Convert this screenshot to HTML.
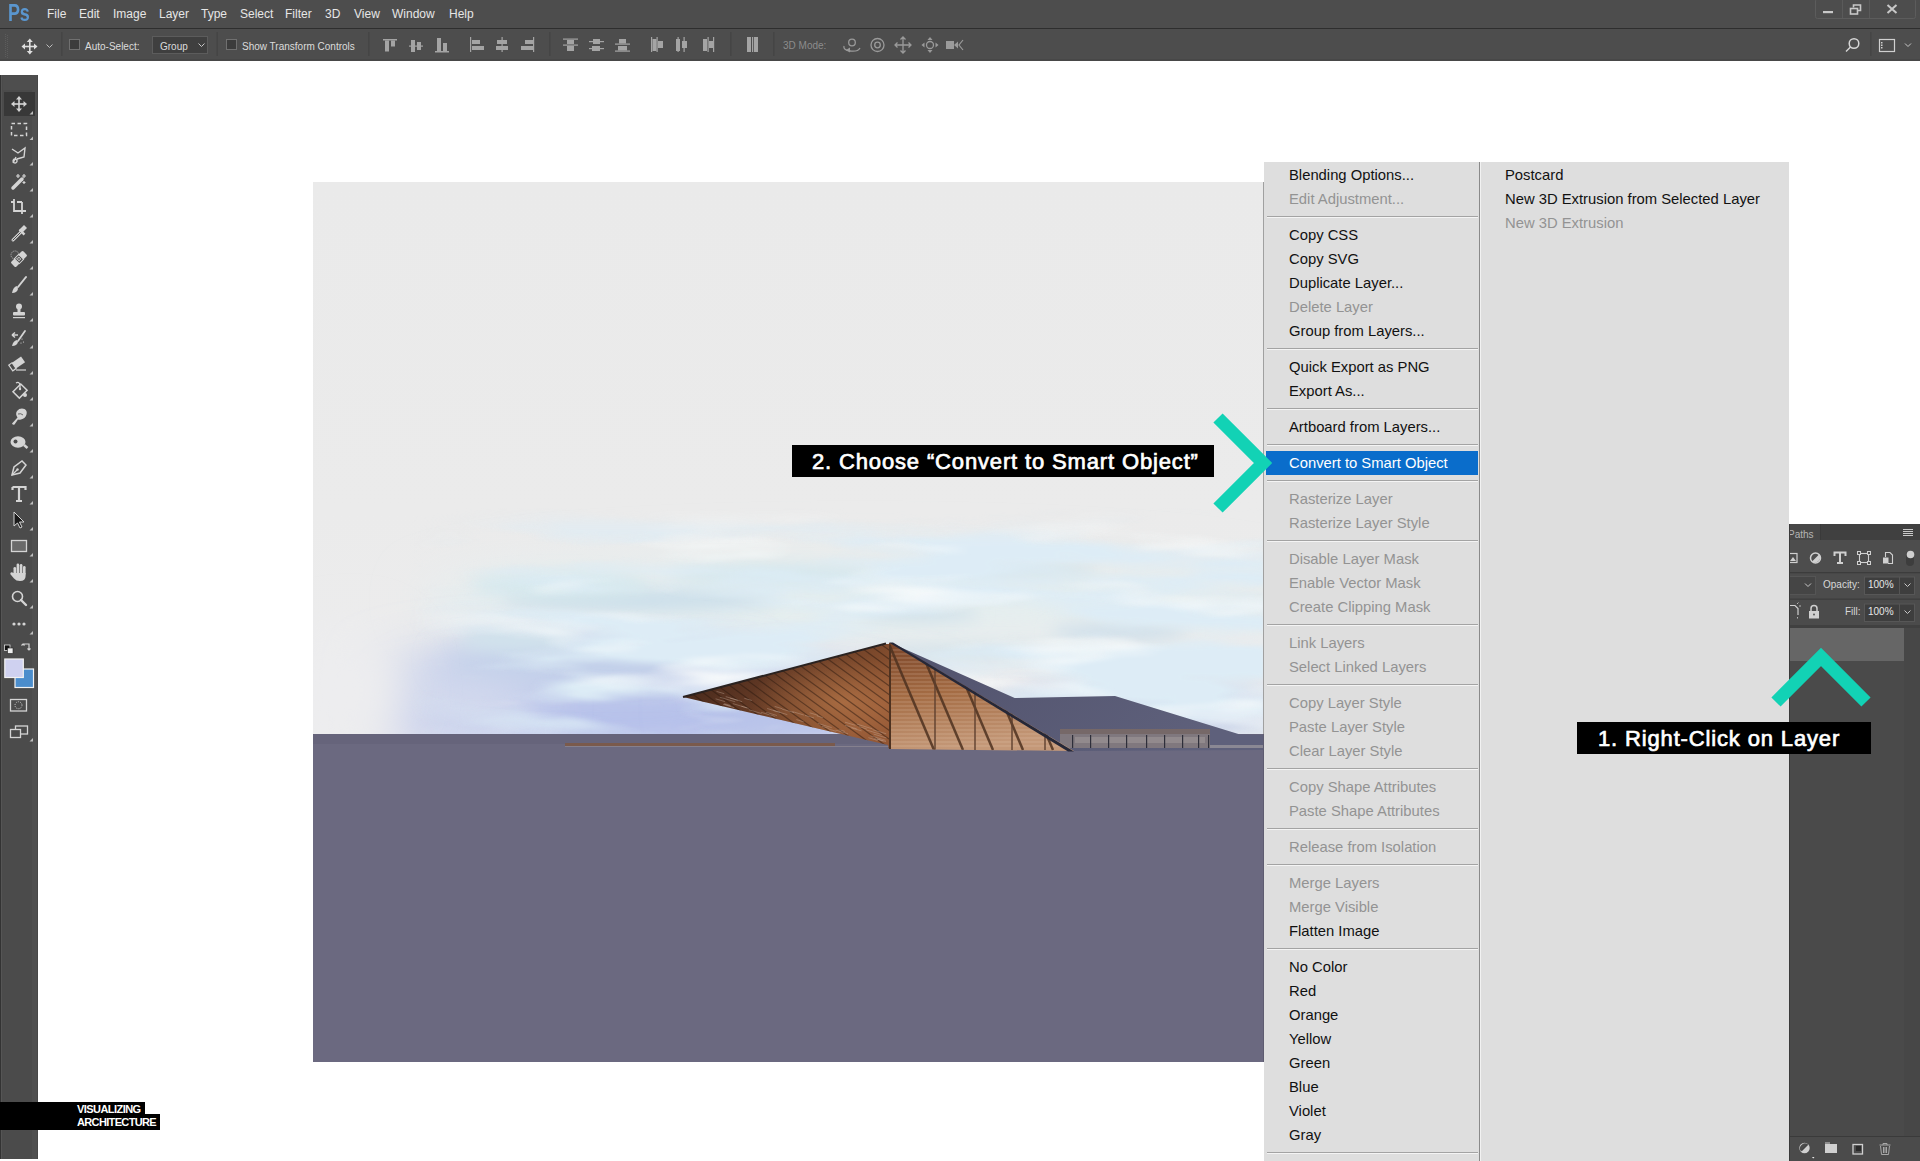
<!DOCTYPE html>
<html><head><meta charset="utf-8">
<style>
*{margin:0;padding:0;box-sizing:border-box}
html,body{width:1920px;height:1161px;overflow:hidden;background:#fff}
body{position:relative;font-family:"Liberation Sans",sans-serif}
.a{position:absolute}
#mb{left:0;top:0;width:1920px;height:28px;background:#4d4d4d}
#mbl{left:0;top:28px;width:1920px;height:1px;background:#2e2e2e}
#ob{left:0;top:29px;width:1920px;height:32px;background:#4d4d4d;border-bottom:2px solid #474747}
.mi{position:absolute;top:6px;font-size:12px;line-height:16px;color:#e6e6e6;white-space:nowrap}
.ot{position:absolute;font-size:11px;line-height:14px;color:#dcdcdc;white-space:nowrap}
#tb{left:0;top:75px;width:38px;height:1084px;background:#4b4b4b;border-left:1px solid #333;border-right:1px solid #474747;box-shadow:inset 1px 0 0 #555, inset -5px 0 0 #4f4f4f}
#cm{left:1264px;top:162px;width:525px;height:999px;background:#dedede}
.it{position:absolute;left:25px;font-size:14.8px;line-height:26px;height:24px;color:#111;white-space:nowrap}
.dis{color:#939393}
.sep{position:absolute;left:3px;width:211px;height:2px;border-top:1px solid #a3a3a3;border-bottom:1px solid #f4f4f4}
.lab{position:absolute;background:#000;color:#fff;font-weight:bold;font-size:22px;white-space:nowrap}
</style></head><body>
<div id="mb" class="a">
 <div class="a" style="left:7.5px;top:0px;font-weight:bold;font-size:23px;line-height:26px;color:#5a96cf;letter-spacing:-0.3px;transform:scaleX(0.78);transform-origin:0 0">Ps</div>
 <span class="mi" style="left:47px">File</span>
 <span class="mi" style="left:79px">Edit</span>
 <span class="mi" style="left:113px">Image</span>
 <span class="mi" style="left:159px">Layer</span>
 <span class="mi" style="left:201px">Type</span>
 <span class="mi" style="left:240px">Select</span>
 <span class="mi" style="left:285px">Filter</span>
 <span class="mi" style="left:325px">3D</span>
 <span class="mi" style="left:354px">View</span>
 <span class="mi" style="left:392px">Window</span>
 <span class="mi" style="left:449px">Help</span>
<svg class="a" style="left:1800px;top:0" width="120" height="28">
<rect x="15.5" y="-1" width="100" height="19.5" rx="2" fill="none" stroke="#5c5c5c"/>
<line x1="42.5" y1="0" x2="42.5" y2="18" stroke="#5a5a5a"/><line x1="69.5" y1="0" x2="69.5" y2="18" stroke="#5a5a5a"/>
<rect x="23" y="11" width="10" height="2.2" fill="#c8c8c8"/>
<rect x="50.5" y="8.5" width="7" height="5.5" fill="none" stroke="#c8c8c8" stroke-width="1.6"/>
<path d="M53.5,7.5 v-2.5 h7 v5.5 h-2.5" fill="none" stroke="#c8c8c8" stroke-width="1.6"/>
<path d="M87.5,5 l9,8 M96.5,5 l-9,8" stroke="#c8c8c8" stroke-width="2"/>
</svg>
</div>
<div id="mbl" class="a"></div>
<div id="ob" class="a">
<svg class="a" style="left:0;top:0" width="1920" height="32" viewBox="0 29 1920 32">
<g fill="#5c5c5c"><rect x="5" y="34" width="1" height="1"/><rect x="7" y="35" width="1" height="1"/><rect x="5" y="36" width="1" height="1"/><rect x="7" y="37" width="1" height="1"/><rect x="5" y="38" width="1" height="1"/><rect x="7" y="39" width="1" height="1"/><rect x="5" y="40" width="1" height="1"/><rect x="7" y="41" width="1" height="1"/><rect x="5" y="42" width="1" height="1"/><rect x="7" y="43" width="1" height="1"/><rect x="5" y="44" width="1" height="1"/><rect x="7" y="45" width="1" height="1"/><rect x="5" y="46" width="1" height="1"/><rect x="7" y="47" width="1" height="1"/><rect x="5" y="48" width="1" height="1"/><rect x="7" y="49" width="1" height="1"/><rect x="5" y="50" width="1" height="1"/><rect x="7" y="51" width="1" height="1"/><rect x="5" y="52" width="1" height="1"/><rect x="7" y="53" width="1" height="1"/><rect x="5" y="54" width="1" height="1"/><rect x="7" y="55" width="1" height="1"/><rect x="5" y="56" width="1" height="1"/><rect x="7" y="57" width="1" height="1"/></g>
<g fill="#454545"><rect x="61" y="32" width="1.5" height="24"/><rect x="216.5" y="32" width="1.5" height="24"/><rect x="368" y="32" width="1.5" height="24"/><rect x="549" y="32" width="1.5" height="24"/><rect x="730" y="32" width="1.5" height="24"/><rect x="773" y="32" width="1.5" height="24"/><rect x="1870" y="32" width="1.5" height="24"/></g>
<!-- move icon -->
<g fill="#dedede" stroke="none">
<rect x="29" y="40" width="1.6" height="13"/><rect x="23" y="45.7" width="13" height="1.6"/>
<polygon points="29.8,38.5 26.8,42 32.8,42"/><polygon points="29.8,54.5 26.8,51 32.8,51"/>
<polygon points="21.5,46.5 25,43.5 25,49.5"/><polygon points="37.5,46.5 34,43.5 34,49.5"/>
</g>
<polyline points="46.5,44.5 49.5,47.5 52.5,44.5" fill="none" stroke="#bdbdbd" stroke-width="1"/>
<rect x="69.5" y="39.5" width="10" height="10" fill="#3c3c3c" stroke="#707070" stroke-width="1"/>
<rect x="152.5" y="36.5" width="55" height="17" fill="#3f3f3f" stroke="#5c5c5c" stroke-width="1"/>
<polyline points="198.5,43.5 201.5,46.5 204.5,43.5" fill="none" stroke="#c8c8c8" stroke-width="1"/>
<rect x="226.5" y="39.5" width="10" height="10" fill="#3c3c3c" stroke="#707070" stroke-width="1"/>
<g fill="#a4a4a4">
<!-- align top -->
<rect x="383" y="39" width="14" height="1.5"/><rect x="385" y="40.5" width="4" height="11"/><rect x="391" y="40.5" width="4" height="6"/>
<!-- align vcenter -->
<rect x="409" y="45.5" width="14" height="1.2"/><rect x="411" y="40" width="4" height="12"/><rect x="417" y="42" width="4" height="8"/>
<!-- align bottom -->
<rect x="435" y="51" width="14" height="1.5"/><rect x="437" y="38" width="4" height="13"/><rect x="443" y="43" width="4" height="8"/>
<!-- align left -->
<rect x="470" y="37" width="1.2" height="15"/><rect x="472" y="40" width="8" height="4"/><rect x="472" y="46" width="12" height="4"/>
<!-- align hcenter -->
<rect x="501.5" y="37" width="1.2" height="15"/><rect x="497" y="40" width="10" height="4"/><rect x="496" y="46" width="12" height="4"/>
<!-- align right -->
<rect x="533" y="37" width="1.2" height="15"/><rect x="525" y="40" width="8" height="4"/><rect x="521" y="46" width="12" height="4"/>
<!-- distribute top/center/bottom -->
<rect x="563" y="38.5" width="15" height="1.2"/><rect x="567" y="40" width="7" height="4"/><rect x="563" y="44.5" width="15" height="1.2"/><rect x="567" y="46" width="7" height="5"/>
<rect x="589" y="41" width="15" height="1.2"/><rect x="593" y="39" width="7" height="5"/><rect x="589" y="48" width="15" height="1.2"/><rect x="592" y="46" width="8" height="5"/>
<rect x="615" y="43.5" width="15" height="1.2"/><rect x="619" y="39" width="7" height="4.5"/><rect x="615" y="50.5" width="15" height="1.2"/><rect x="618" y="46" width="9" height="4.5"/>
<!-- distribute left/center/right -->
<rect x="651" y="37" width="1.2" height="15"/><rect x="652.5" y="39" width="4" height="12"/><rect x="656.5" y="37" width="1.2" height="15"/><rect x="658" y="41" width="5" height="7"/>
<rect x="676" y="39" width="4" height="12"/><rect x="677.5" y="37" width="1.2" height="15"/><rect x="682" y="41" width="5" height="7"/><rect x="683.5" y="37" width="1.2" height="15"/>
<rect x="703" y="39" width="4" height="12"/><rect x="707.5" y="37" width="1.2" height="15"/><rect x="709" y="41" width="4" height="7"/><rect x="713" y="37" width="1.2" height="15"/>
<!-- auto align -->
<rect x="747" y="37" width="4" height="15"/><rect x="752" y="37" width="1.2" height="15"/><rect x="754" y="37" width="4" height="15"/>
</g>
<g fill="none" stroke="#9a9a9a" stroke-width="1.3">
<circle cx="852" cy="42.5" r="3.3"/><path d="M844,46 q-1,4 6,5 q8,1 10,-3"/><polygon points="846,50 850,47.5 850,52.5" fill="#9a9a9a" stroke="none"/>
<circle cx="877.5" cy="45" r="6.5"/><circle cx="877.5" cy="45" r="2.8"/>
<path d="M903,37 v16 M895,45 h16 M900.5,39.5 l2.5,-2.5 l2.5,2.5 M900.5,50.5 l2.5,2.5 l2.5,-2.5 M897.5,42.5 l-2.5,2.5 l2.5,2.5 M908.5,42.5 l2.5,2.5 l-2.5,2.5"/>
<circle cx="930" cy="45" r="3.5"/>
</g>
<g fill="#9a9a9a"><polygon points="930,37 927.5,40 932.5,40"/><polygon points="930,53 927.5,50 932.5,50"/><polygon points="921.5,45 924.5,42.5 924.5,47.5"/><polygon points="938.5,45 935.5,42.5 935.5,47.5"/>
<rect x="946" y="41" width="8" height="8"/><polygon points="954,45 958,41.5 958,48.5"/></g>
<polyline points="963,40 959,45 963,50" fill="none" stroke="#9a9a9a" stroke-width="1.2"/>
<!-- right side -->
<g fill="none" stroke="#d6d6d6" stroke-width="1.5"><circle cx="1854" cy="43.5" r="4.8"/><line x1="1850.5" y1="47" x2="1846" y2="51.5"/></g>
<rect x="1879.5" y="39.5" width="15" height="12" fill="none" stroke="#d0d0d0" stroke-width="1.2"/>
<g fill="#d0d0d0"><rect x="1881" y="42" width="1.5" height="1.5"/><rect x="1881" y="44.5" width="1.5" height="1.5"/><rect x="1881" y="47" width="1.5" height="1.5"/></g>
<polyline points="1905,43.5 1908,46.5 1911,43.5" fill="none" stroke="#c8c8c8" stroke-width="1"/>
</svg>
<span class="ot" style="left:85px;top:11px;font-size:10px">Auto-Select:</span>
<span class="ot" style="left:160px;top:11px;font-size:10px">Group</span>
<span class="ot" style="left:242px;top:11px;font-size:10px">Show Transform Controls</span>
<span class="ot" style="left:783px;top:10px;font-size:10px;color:#8c8c8c">3D Mode:</span>
</div>
<div id="tb" class="a"></div>
<svg class="a" style="left:0;top:0" width="40" height="1161">
<rect x="4" y="92" width="31" height="24" fill="#383838"/>
<rect x="3" y="76" width="33" height="14" fill="#4e4e4e"/>
<g transform="translate(19,104)"><rect x="-0.8" y="-6" width="1.6" height="12" fill="#d4d4d4"/><rect x="-6" y="-0.8" width="12" height="1.6" fill="#d4d4d4"/>
<polygon points="0,-8 -3,-4.5 3,-4.5" fill="#d4d4d4"/><polygon points="0,8 -3,4.5 3,4.5" fill="#d4d4d4"/><polygon points="-8,0 -4.5,-3 -4.5,3" fill="#d4d4d4"/><polygon points="8,0 4.5,-3 4.5,3" fill="#d4d4d4"/></g>
<polygon points="33,111 33,114.5 29.5,114.5" fill="#bdbdbd"/>
<g transform="translate(19,129.5)"><rect x="-7.5" y="-6" width="15" height="12" fill="none" stroke="#d4d4d4" stroke-width="1.5" stroke-dasharray="3.5,2.5"/></g>
<polygon points="33,136.5 33,140.0 29.5,140.0" fill="#bdbdbd"/>
<g transform="translate(19,155)"><path d="M-7,-6 L-1,-2 L6,-7 L5,2 L-2,4 M-3,2 L-6,8 M-4,4 a2,2 0 1,0 0.1,0" fill="none" stroke="#d4d4d4" stroke-width="1.4"/></g>
<polygon points="33,162 33,165.5 29.5,165.5" fill="#bdbdbd"/>
<g transform="translate(19,181)"><path d="M-6,7 L3,-2" stroke="#d4d4d4" stroke-width="3.5" stroke-linecap="round"/><path d="M-1,-7 v4 M-3,-5 h4 M5,-7 v4 M3,-5 h4 M5,0 v3 M3.5,1.5 h3" stroke="#d4d4d4" stroke-width="1.2"/></g>
<polygon points="33,188 33,191.5 29.5,191.5" fill="#bdbdbd"/>
<g transform="translate(19,207)"><path d="M-5,-8 V4 H7 M-8,-5 H-5 M3,-5 V7 M3,-5 H-2 M4,4 H7" fill="none" stroke="#d4d4d4" stroke-width="1.8"/></g>
<polygon points="33,214 33,217.5 29.5,217.5" fill="#bdbdbd"/>
<g transform="translate(19,233)"><path d="M-6,7 L2,-1" stroke="#d4d4d4" stroke-width="3" stroke-linecap="round" fill="none"/><path d="M-6,7 L2,-1" stroke="#4a4a4a" stroke-width="1" stroke-linecap="round"/><path d="M0,-3 L5,-8 L8,-5 L3,0 Z" fill="#d4d4d4"/><rect x="-2" y="-4" width="7" height="2.5" transform="rotate(45)" fill="#d4d4d4"/></g>
<polygon points="33,240 33,243.5 29.5,243.5" fill="#bdbdbd"/>
<g transform="translate(19,259)"><g transform="rotate(-45)"><rect x="-8.5" y="-3.5" width="17" height="7" rx="1.5" fill="#d4d4d4"/><rect x="-3" y="-3.5" width="6" height="7" fill="#4a4a4a" stroke="#d4d4d4"/><circle cx="-1" cy="-1" r="0.8" fill="#d4d4d4"/><circle cx="1" cy="1" r="0.8" fill="#d4d4d4"/><circle cx="-1" cy="1" r="0.8" fill="#d4d4d4"/><circle cx="1" cy="-1" r="0.8" fill="#d4d4d4"/></g><circle cx="-4" cy="-4" r="4" fill="none" stroke="#d4d4d4" stroke-width="0.8" stroke-dasharray="1,1"/></g>
<polygon points="33,266 33,269.5 29.5,269.5" fill="#bdbdbd"/>
<g transform="translate(19,285)"><path d="M-1,2 L7,-8" stroke="#d4d4d4" stroke-width="2" stroke-linecap="round"/><path d="M-2,1 q-4,1 -5,7 q5,0 6,-4 z" fill="#d4d4d4"/></g>
<polygon points="33,292 33,295.5 29.5,295.5" fill="#bdbdbd"/>
<g transform="translate(19,311)"><circle cx="0" cy="-4.5" r="3" fill="#d4d4d4"/><rect x="-1.5" y="-2" width="3" height="3" fill="#d4d4d4"/><rect x="-6" y="1" width="12" height="3.5" rx="1" fill="#d4d4d4"/><rect x="-6" y="6" width="12" height="1.2" fill="#d4d4d4"/></g>
<polygon points="33,318 33,321.5 29.5,321.5" fill="#bdbdbd"/>
<g transform="translate(19,338)"><path d="M-1,3 L6,-7" stroke="#d4d4d4" stroke-width="1.8" stroke-linecap="round"/><path d="M-2,2 q-4,1 -5,6 q5,0 6,-4 z" fill="#d4d4d4"/><path d="M-7,-3 h6 M-7,-3 l3,-2.5 M-7,-3 l3,2.5" stroke="#d4d4d4" stroke-width="1.5" fill="none"/><circle cx="3" cy="1" r="0.6" fill="#d4d4d4"/><circle cx="4.5" cy="4" r="0.6" fill="#d4d4d4"/><circle cx="2" cy="5" r="0.6" fill="#d4d4d4"/></g>
<polygon points="33,345 33,348.5 29.5,348.5" fill="#bdbdbd"/>
<g transform="translate(19,364)"><g transform="rotate(-35)"><rect x="-5" y="-5" width="11" height="7" fill="#d4d4d4"/><rect x="-9" y="-5" width="4" height="7" fill="none" stroke="#d4d4d4" stroke-width="1.2"/></g><path d="M-3,6 H7" stroke="#d4d4d4" stroke-width="1.2"/></g>
<polygon points="33,371 33,374.5 29.5,374.5" fill="#bdbdbd"/>
<g transform="translate(19,390)"><g transform="rotate(-45)"><rect x="-5.5" y="-3" width="11" height="9" fill="none" stroke="#d4d4d4" stroke-width="1.5"/></g><circle cx="6" cy="5" r="2" fill="#d4d4d4"/><path d="M-3,-7 q3,-2 4,2 v4" fill="none" stroke="#d4d4d4" stroke-width="1.3"/><circle cx="1" cy="-1" r="1.2" fill="#d4d4d4"/></g>
<polygon points="33,397 33,400.5 29.5,400.5" fill="#bdbdbd"/>
<g transform="translate(19,416)"><path d="M-7,7.5 L-1.5,1.5 Q-4,-2 -2,-5 Q1,-8.5 5.5,-7 Q8.5,-5.5 7.5,-1.5 Q6.5,2.5 2,3.5 Q0,4 -1,3.5 L-4.5,8.5 Q-6,9.5 -7,7.5 Z" fill="#d4d4d4"/><path d="M-1,-2 Q2,-3 4,-1" stroke="#4b4b4b" stroke-width="0.8" fill="none"/></g>
<polygon points="33,423 33,426.5 29.5,426.5" fill="#bdbdbd"/>
<g transform="translate(19,442)"><ellipse cx="-1" cy="0" rx="7.5" ry="5.8" fill="#d4d4d4"/><circle cx="-3.5" cy="-0.5" r="2" fill="#4b4b4b"/><path d="M5,3 L8.5,6" stroke="#d4d4d4" stroke-width="2.5"/></g>
<polygon points="33,449 33,452.5 29.5,452.5" fill="#bdbdbd"/>
<g transform="translate(19,468)"><path d="M-7,7 L-5,-1 L3,-7 L7,-3 L1,5 Z" fill="none" stroke="#d4d4d4" stroke-width="1.5"/><path d="M-7,7 L-2,2" stroke="#d4d4d4" stroke-width="1.2"/><circle cx="-1.5" cy="1.5" r="1.2" fill="#d4d4d4"/></g>
<polygon points="33,475 33,478.5 29.5,478.5" fill="#bdbdbd"/>
<g transform="translate(19,494)"><path d="M-6.5,-7 H6.5 V-4 M-6.5,-7 V-4 M0,-7 V7 M-3,7 H3" fill="none" stroke="#d4d4d4" stroke-width="2.2"/></g>
<polygon points="33,501 33,504.5 29.5,504.5" fill="#bdbdbd"/>
<g transform="translate(19,520)"><polygon points="-5,-8 -5,6 -1.5,3 1,8 3,7 0.5,2 5,2" fill="#1a1a1a" stroke="#d4d4d4" stroke-width="1"/></g>
<polygon points="33,527 33,530.5 29.5,530.5" fill="#bdbdbd"/>
<g transform="translate(19,546)"><rect x="-7.5" y="-5.5" width="15" height="11" fill="#6a6a6a" stroke="#d4d4d4" stroke-width="1.3"/></g>
<polygon points="33,553 33,556.5 29.5,556.5" fill="#bdbdbd"/>
<g transform="translate(19,572)"><g fill="#d4d4d4"><rect x="-5.5" y="-5" width="2.6" height="9" rx="1.3"/><rect x="-2.4" y="-8.5" width="2.6" height="12" rx="1.3"/><rect x="0.8" y="-8" width="2.6" height="11" rx="1.3"/><rect x="4" y="-6" width="2.6" height="9" rx="1.3"/><path d="M-5.5,1 H6.6 V4 Q6.6,9 1,9 Q-3,9 -5,6.5 L-8.8,2 Q-8.5,-0.5 -6.5,0.5 Z"/></g></g>
<polygon points="33,579 33,582.5 29.5,582.5" fill="#bdbdbd"/>
<g transform="translate(19,598)"><circle cx="-1.5" cy="-1.5" r="5" fill="none" stroke="#d4d4d4" stroke-width="1.6"/><path d="M2,2 L7,7" stroke="#d4d4d4" stroke-width="2.4" stroke-linecap="round"/></g>
<polygon points="33,605 33,608.5 29.5,608.5" fill="#bdbdbd"/>
<g transform="translate(19,624)"><circle cx="-5" cy="0" r="1.6" fill="#d4d4d4"/><circle cx="0" cy="0" r="1.6" fill="#d4d4d4"/><circle cx="5" cy="0" r="1.6" fill="#d4d4d4"/></g>
<polygon points="33,631 33,634.5 29.5,634.5" fill="#bdbdbd"/>
<rect x="4.5" y="645" width="5.5" height="5.5" fill="#111" stroke="#ddd" stroke-width="0.8"/><rect x="7.5" y="648" width="5.5" height="5.5" fill="#eee" stroke="#222" stroke-width="0.6"/>
<path d="M23,644 h6 v6 M21.5,645.5 l1.5,-1.5 l1.5,1.5 M27.5,648.5 l1.5,1.5 l1.5,-1.5" fill="none" stroke="#d4d4d4" stroke-width="1.2"/>
<rect x="15" y="669" width="18.5" height="18.5" fill="#4b8dcc" stroke="#f2f2f2" stroke-width="1.2"/>
<rect x="4.8" y="659" width="18.5" height="18.5" fill="#cfd1f0" stroke="#f2f2f2" stroke-width="1.2"/>
<rect x="10.5" y="699.5" width="16" height="11.5" fill="none" stroke="#d4d4d4" stroke-width="1.3"/><circle cx="18.5" cy="705.25" r="3.5" fill="none" stroke="#d4d4d4" stroke-width="1" stroke-dasharray="1,1.2"/>
<rect x="15.5" y="726" width="12" height="8" fill="#4a4a4a" stroke="#d4d4d4" stroke-width="1.3"/><rect x="10.5" y="729.5" width="10" height="8" fill="#4a4a4a" stroke="#d4d4d4" stroke-width="1.3"/>
<polygon points="33,738 33,741.5 29.5,741.5" fill="#bdbdbd"/>
</svg>
<svg class="a" style="left:313px;top:182px" width="951" height="880" viewBox="0 0 951 880">
<defs>
<linearGradient id="sky" x1="0" y1="0" x2="0" y2="1">
<stop offset="0" stop-color="#eaeaea"/><stop offset="0.6" stop-color="#ebebeb"/><stop offset="1" stop-color="#ededee"/>
</linearGradient>
<filter id="b6" x="-150%" y="-150%" width="400%" height="400%"><feGaussianBlur stdDeviation="6"/></filter>
<filter id="b4" x="-150%" y="-150%" width="400%" height="400%"><feGaussianBlur stdDeviation="4"/></filter>
<filter id="b8" x="-150%" y="-150%" width="400%" height="400%"><feGaussianBlur stdDeviation="8"/></filter>
<filter id="b14" x="-150%" y="-150%" width="400%" height="400%"><feGaussianBlur stdDeviation="14"/></filter>
<filter id="b25" x="-150%" y="-150%" width="400%" height="400%"><feGaussianBlur stdDeviation="25"/></filter>
<linearGradient id="wood" x1="0" y1="0" x2="1" y2="0.5">
<stop offset="0" stop-color="#3a2218"/><stop offset="0.4" stop-color="#5a3422"/><stop offset="0.8" stop-color="#7e4a2c"/><stop offset="1" stop-color="#925634"/>
</linearGradient>
<radialGradient id="glow" cx="0.78" cy="0.55" r="0.45">
<stop offset="0" stop-color="#b8784a" stop-opacity="0.7"/><stop offset="1" stop-color="#b8784a" stop-opacity="0"/>
</radialGradient>
<linearGradient id="fac" x1="0" y1="0" x2="0.2" y2="1">
<stop offset="0" stop-color="#7a4428"/><stop offset="0.5" stop-color="#a46c44"/><stop offset="1" stop-color="#c49878"/>
</linearGradient>
<linearGradient id="roof2" x1="0" y1="0" x2="1" y2="0.3">
<stop offset="0" stop-color="#51526c"/><stop offset="1" stop-color="#5e607b"/>
</linearGradient>
<filter id="cl1" x="0" y="0" width="100%" height="100%" filterUnits="userSpaceOnUse">
<feTurbulence type="fractalNoise" baseFrequency="0.004 0.028" numOctaves="4" seed="7" result="n"/>
<feColorMatrix type="matrix" values="0 0 0 0 0.72  0 0 0 0 0.84  0 0 0 0 0.92  4 0 0 0 -1.6"/>
<feGaussianBlur stdDeviation="1.5"/>
</filter>
<filter id="cl2" x="0" y="0" width="100%" height="100%" filterUnits="userSpaceOnUse">
<feTurbulence type="fractalNoise" baseFrequency="0.006 0.035" numOctaves="3" seed="11" result="n"/>
<feColorMatrix type="matrix" values="0 0 0 0 0.95  0 0 0 0 0.97  0 0 0 0 0.97  2.6 0 0 0 -1.45"/>
<feGaussianBlur stdDeviation="1.5"/>
</filter>
<linearGradient id="bandV" x1="0" y1="0" x2="0" y2="1">
<stop offset="0" stop-color="#000"/><stop offset="0.59" stop-color="#000"/><stop offset="0.66" stop-color="#fff"/><stop offset="0.95" stop-color="#fff"/><stop offset="1" stop-color="#888"/>
</linearGradient>
<linearGradient id="bandH" x1="0" y1="0" x2="1" y2="0">
<stop offset="0" stop-color="#000"/><stop offset="0.1" stop-color="#000"/><stop offset="0.25" stop-color="#fff"/><stop offset="1" stop-color="#fff"/>
</linearGradient>
<mask id="mV" maskUnits="userSpaceOnUse" x="0" y="0" width="951" height="552"><rect x="0" y="0" width="951" height="552" fill="url(#bandV)"/></mask>
<mask id="mH" maskUnits="userSpaceOnUse" x="0" y="0" width="951" height="552"><rect x="0" y="0" width="951" height="552" fill="url(#bandH)"/></mask>
<clipPath id="skyclip"><rect x="0" y="0" width="951" height="552"/></clipPath>
<clipPath id="canclip"><polygon points="370.0,515.0 573.0,462.0 576.0,462.0 576.0,567.0 575.0,563.0"/></clipPath>
<clipPath id="facclip"><polygon points="576.0,461.0 580.0,461.0 761.0,569.0 576.0,567.0"/></clipPath>
</defs>
<rect x="0" y="0" width="951" height="552" fill="url(#sky)"/>
<g clip-path="url(#skyclip)">
<ellipse cx="547" cy="418" rx="440" ry="40" fill="#e4eeef" filter="url(#b25)" opacity="1"/>
<ellipse cx="327" cy="532" rx="260" ry="38" fill="#adb9ea" filter="url(#b25)" opacity="1"/>
<ellipse cx="247" cy="494" rx="190" ry="26" fill="#bfcaea" filter="url(#b25)" opacity="1"/>
<ellipse cx="507" cy="524" rx="130" ry="26" fill="#b9c5e9" filter="url(#b25)" opacity="1"/>
<ellipse cx="157" cy="523" rx="70" ry="30" fill="#d6dcee" filter="url(#b25)" opacity="1"/>
<ellipse cx="297" cy="478" rx="170" ry="20" fill="#c3d1ea" filter="url(#b14)" opacity="1"/>
<ellipse cx="877" cy="530" rx="90" ry="24" fill="#c0cae6" filter="url(#b14)" opacity="1"/>
<ellipse cx="717" cy="534" rx="80" ry="16" fill="#c8d2e8" filter="url(#b14)" opacity="1"/>
<ellipse cx="327" cy="418" rx="140" ry="10" fill="#cadeea" filter="url(#b8)" opacity="1"/>
<ellipse cx="247" cy="403" rx="90" ry="12" fill="#d4e8ec" filter="url(#b8)" opacity="1"/>
<ellipse cx="467" cy="393" rx="110" ry="9" fill="#d2e6ec" filter="url(#b8)" opacity="1"/>
<ellipse cx="697" cy="388" rx="90" ry="7" fill="#d0e2ea" filter="url(#b8)" opacity="1"/>
<ellipse cx="607" cy="432" rx="60" ry="7" fill="#cfe0ea" filter="url(#b8)" opacity="1"/>
<ellipse cx="807" cy="450" rx="70" ry="8" fill="#cddeea" filter="url(#b8)" opacity="1"/>
<ellipse cx="922" cy="426" rx="40" ry="6" fill="#d4e4ea" filter="url(#b8)" opacity="1"/>
<ellipse cx="667" cy="470" rx="110" ry="7" fill="#d2e2ea" filter="url(#b8)" opacity="1"/>
<ellipse cx="867" cy="486" rx="90" ry="7" fill="#d0deea" filter="url(#b8)" opacity="1"/>
<ellipse cx="567" cy="498" rx="60" ry="6" fill="#ccdaea" filter="url(#b8)" opacity="1"/>
<ellipse cx="767" cy="508" rx="70" ry="6" fill="#cad6ea" filter="url(#b8)" opacity="1"/>
<ellipse cx="207" cy="458" rx="60" ry="12" fill="#d0e2ec" filter="url(#b8)" opacity="1"/>
<ellipse cx="37" cy="508" rx="55" ry="60" fill="#ededef" filter="url(#b25)" opacity="1"/>
<g mask="url(#mH)"><g mask="url(#mV)"><rect x="0" y="0" width="951" height="552" filter="url(#cl1)"/><rect x="0" y="0" width="951" height="552" filter="url(#cl2)"/></g></g>
</g>
<rect x="0" y="552" width="951" height="328" fill="#6b6980"/>
<rect x="0" y="552" width="951" height="10" fill="#66647b"/>
<rect x="252" y="561" width="270" height="3" fill="#7a5a4c"/>
<rect x="252" y="564" width="699" height="1" fill="#85808e"/>
<polygon points="578.0,461.0 701.7,516.0 802.0,514.0 927.0,552.5 951.0,553.0 951.0,568.0 759.0,569.0" fill="url(#roof2)"/>
<rect x="747" y="547" width="150" height="19" fill="#80787e"/>
<rect x="747" y="547" width="150" height="5" fill="#766868"/>
<rect x="762" y="555" width="130" height="6" fill="#9a9294" opacity="0.7"/>
<rect x="759" y="553" width="1.2" height="13" fill="#2e2e3a"/>
<rect x="777" y="553" width="1.2" height="13" fill="#2e2e3a"/>
<rect x="795" y="553" width="1.2" height="13" fill="#2e2e3a"/>
<rect x="813" y="553" width="1.2" height="13" fill="#2e2e3a"/>
<rect x="833" y="553" width="1.2" height="13" fill="#2e2e3a"/>
<rect x="851" y="553" width="1.2" height="13" fill="#2e2e3a"/>
<rect x="869" y="553" width="1.2" height="13" fill="#2e2e3a"/>
<rect x="885" y="553" width="1.2" height="13" fill="#2e2e3a"/>
<rect x="895" y="553" width="1.2" height="13" fill="#2e2e3a"/>
<rect x="897" y="563" width="54" height="3" fill="#8a8894"/>
<polygon points="370.0,515.0 573.0,462.0 576.0,462.0 576.0,567.0 575.0,563.0" fill="url(#wood)"/>
<polygon points="370.0,515.0 573.0,462.0 576.0,462.0 576.0,567.0 575.0,563.0" fill="url(#glow)"/>
<g clip-path="url(#canclip)">
<line x1="377" y1="510.173" x2="487" y2="590.173" stroke="#2c1a10" stroke-width="1.2" opacity="0.5"/>
<line x1="386" y1="507.82399999999996" x2="496" y2="587.824" stroke="#2c1a10" stroke-width="1.2" opacity="0.5"/>
<line x1="395" y1="505.475" x2="505" y2="585.475" stroke="#2c1a10" stroke-width="1.2" opacity="0.5"/>
<line x1="404" y1="503.126" x2="514" y2="583.126" stroke="#2c1a10" stroke-width="1.2" opacity="0.5"/>
<line x1="413" y1="500.77700000000004" x2="523" y2="580.777" stroke="#2c1a10" stroke-width="1.2" opacity="0.5"/>
<line x1="422" y1="498.428" x2="532" y2="578.428" stroke="#2c1a10" stroke-width="1.2" opacity="0.5"/>
<line x1="431" y1="496.07899999999995" x2="541" y2="576.079" stroke="#2c1a10" stroke-width="1.2" opacity="0.5"/>
<line x1="440" y1="493.73" x2="550" y2="573.73" stroke="#2c1a10" stroke-width="1.2" opacity="0.5"/>
<line x1="449" y1="491.381" x2="559" y2="571.381" stroke="#2c1a10" stroke-width="1.2" opacity="0.5"/>
<line x1="458" y1="489.03200000000004" x2="568" y2="569.032" stroke="#2c1a10" stroke-width="1.2" opacity="0.5"/>
<line x1="467" y1="486.683" x2="577" y2="566.683" stroke="#2c1a10" stroke-width="1.2" opacity="0.5"/>
<line x1="476" y1="484.33399999999995" x2="586" y2="564.334" stroke="#2c1a10" stroke-width="1.2" opacity="0.5"/>
<line x1="485" y1="481.985" x2="595" y2="561.985" stroke="#2c1a10" stroke-width="1.2" opacity="0.5"/>
<line x1="494" y1="479.63599999999997" x2="604" y2="559.636" stroke="#2c1a10" stroke-width="1.2" opacity="0.5"/>
<line x1="503" y1="477.28700000000003" x2="613" y2="557.287" stroke="#2c1a10" stroke-width="1.2" opacity="0.5"/>
<line x1="512" y1="474.938" x2="622" y2="554.938" stroke="#2c1a10" stroke-width="1.2" opacity="0.5"/>
<line x1="521" y1="472.58899999999994" x2="631" y2="552.5889999999999" stroke="#2c1a10" stroke-width="1.2" opacity="0.5"/>
<line x1="530" y1="470.24" x2="640" y2="550.24" stroke="#2c1a10" stroke-width="1.2" opacity="0.5"/>
<line x1="539" y1="467.89099999999996" x2="649" y2="547.891" stroke="#2c1a10" stroke-width="1.2" opacity="0.5"/>
<line x1="548" y1="465.54200000000003" x2="658" y2="545.542" stroke="#2c1a10" stroke-width="1.2" opacity="0.5"/>
<line x1="557" y1="463.193" x2="667" y2="543.193" stroke="#2c1a10" stroke-width="1.2" opacity="0.5"/>
<line x1="566" y1="460.84400000000005" x2="676" y2="540.844" stroke="#2c1a10" stroke-width="1.2" opacity="0.5"/>
<line x1="575" y1="458.495" x2="685" y2="538.495" stroke="#2c1a10" stroke-width="1.2" opacity="0.5"/>
<line x1="584" y1="456.14599999999996" x2="694" y2="536.146" stroke="#2c1a10" stroke-width="1.2" opacity="0.5"/>
<line x1="504.8" y1="541.4" x2="518.7" y2="545.6" stroke="#d0b8a8" stroke-width="1" opacity="0.35"/>
<line x1="557.5" y1="553.8" x2="572.7" y2="558.3" stroke="#d0b8a8" stroke-width="1" opacity="0.35"/>
<line x1="406.8" y1="515.2" x2="422.2" y2="519.8" stroke="#d0b8a8" stroke-width="1" opacity="0.35"/>
<line x1="509.1" y1="544.4" x2="516.2" y2="546.5" stroke="#d0b8a8" stroke-width="1" opacity="0.35"/>
<line x1="479.4" y1="529.6" x2="490.8" y2="533.0" stroke="#d0b8a8" stroke-width="1" opacity="0.35"/>
<line x1="496.7" y1="530.8" x2="504.9" y2="533.3" stroke="#d0b8a8" stroke-width="1" opacity="0.35"/>
<line x1="448.1" y1="530.3" x2="461.8" y2="534.4" stroke="#d0b8a8" stroke-width="1" opacity="0.35"/>
<line x1="428.3" y1="524.2" x2="435.7" y2="526.4" stroke="#d0b8a8" stroke-width="1" opacity="0.35"/>
<line x1="503.9" y1="533.8" x2="509.9" y2="535.7" stroke="#d0b8a8" stroke-width="1" opacity="0.35"/>
<line x1="545.8" y1="544.6" x2="553.9" y2="547.1" stroke="#d0b8a8" stroke-width="1" opacity="0.35"/>
<line x1="564.1" y1="556.9" x2="573.0" y2="559.6" stroke="#d0b8a8" stroke-width="1" opacity="0.35"/>
<line x1="560.6" y1="552.1" x2="573.4" y2="555.9" stroke="#d0b8a8" stroke-width="1" opacity="0.35"/>
<line x1="435.8" y1="527.7" x2="448.7" y2="531.6" stroke="#d0b8a8" stroke-width="1" opacity="0.35"/>
<line x1="561.5" y1="556.5" x2="570.5" y2="559.2" stroke="#d0b8a8" stroke-width="1" opacity="0.35"/>
<line x1="461.6" y1="524.4" x2="469.1" y2="526.7" stroke="#d0b8a8" stroke-width="1" opacity="0.35"/>
<line x1="412.7" y1="514.6" x2="424.8" y2="518.2" stroke="#d0b8a8" stroke-width="1" opacity="0.35"/>
<line x1="402.6" y1="516.8" x2="411.9" y2="519.6" stroke="#d0b8a8" stroke-width="1" opacity="0.35"/>
<line x1="453.1" y1="530.3" x2="464.0" y2="533.5" stroke="#d0b8a8" stroke-width="1" opacity="0.35"/>
<line x1="454.1" y1="526.5" x2="467.2" y2="530.4" stroke="#d0b8a8" stroke-width="1" opacity="0.35"/>
<line x1="411.4" y1="522.4" x2="417.6" y2="524.3" stroke="#d0b8a8" stroke-width="1" opacity="0.35"/>
<line x1="525.7" y1="547.6" x2="531.9" y2="549.4" stroke="#d0b8a8" stroke-width="1" opacity="0.35"/>
<line x1="532.0" y1="543.3" x2="543.8" y2="546.8" stroke="#d0b8a8" stroke-width="1" opacity="0.35"/>
<line x1="403.5" y1="509.4" x2="411.3" y2="511.7" stroke="#d0b8a8" stroke-width="1" opacity="0.35"/>
<line x1="559.6" y1="547.7" x2="573.2" y2="551.8" stroke="#d0b8a8" stroke-width="1" opacity="0.35"/>
<line x1="555.4" y1="555.7" x2="564.8" y2="558.5" stroke="#d0b8a8" stroke-width="1" opacity="0.35"/>
<line x1="460.5" y1="528.5" x2="474.3" y2="532.6" stroke="#d0b8a8" stroke-width="1" opacity="0.35"/>
<line x1="419.8" y1="521.6" x2="433.8" y2="525.8" stroke="#d0b8a8" stroke-width="1" opacity="0.35"/>
<line x1="543.8" y1="542.1" x2="559.3" y2="546.8" stroke="#d0b8a8" stroke-width="1" opacity="0.35"/>
<line x1="417.0" y1="516.1" x2="429.2" y2="519.7" stroke="#d0b8a8" stroke-width="1" opacity="0.35"/>
<line x1="553.5" y1="548.0" x2="568.7" y2="552.6" stroke="#d0b8a8" stroke-width="1" opacity="0.35"/>
<line x1="491.9" y1="533.3" x2="501.1" y2="536.0" stroke="#d0b8a8" stroke-width="1" opacity="0.35"/>
<line x1="431.3" y1="516.3" x2="438.8" y2="518.5" stroke="#d0b8a8" stroke-width="1" opacity="0.35"/>
<line x1="515.7" y1="547.1" x2="523.3" y2="549.3" stroke="#d0b8a8" stroke-width="1" opacity="0.35"/>
<line x1="410.0" y1="522.2" x2="421.3" y2="525.6" stroke="#d0b8a8" stroke-width="1" opacity="0.35"/>
<line x1="469.0" y1="527.0" x2="480.9" y2="530.6" stroke="#d0b8a8" stroke-width="1" opacity="0.35"/>
<line x1="538.3" y1="545.9" x2="548.6" y2="548.9" stroke="#d0b8a8" stroke-width="1" opacity="0.35"/>
<line x1="411.2" y1="521.6" x2="417.5" y2="523.5" stroke="#d0b8a8" stroke-width="1" opacity="0.35"/>
<line x1="483.4" y1="537.6" x2="490.7" y2="539.8" stroke="#d0b8a8" stroke-width="1" opacity="0.35"/>
<line x1="522.7" y1="548.1" x2="535.0" y2="551.8" stroke="#d0b8a8" stroke-width="1" opacity="0.35"/>
<line x1="532.0" y1="540.2" x2="542.4" y2="543.3" stroke="#d0b8a8" stroke-width="1" opacity="0.35"/>
</g>
<polyline points="370.0,515.0 573.0,461.5" fill="none" stroke="#2a2220" stroke-width="2"/>
<polygon points="576.0,461.0 580.0,461.0 761.0,569.0 576.0,567.0" fill="url(#fac)"/>
<g clip-path="url(#facclip)">
<line x1="576" y1="468" x2="759" y2="468" stroke="#e8d0b8" stroke-width="1" opacity="0.3"/>
<line x1="576" y1="472" x2="759" y2="472" stroke="#e8d0b8" stroke-width="1" opacity="0.3"/>
<line x1="576" y1="476" x2="759" y2="476" stroke="#e8d0b8" stroke-width="1" opacity="0.3"/>
<line x1="576" y1="480" x2="759" y2="480" stroke="#e8d0b8" stroke-width="1" opacity="0.3"/>
<line x1="576" y1="484" x2="759" y2="484" stroke="#e8d0b8" stroke-width="1" opacity="0.3"/>
<line x1="576" y1="488" x2="759" y2="488" stroke="#e8d0b8" stroke-width="1" opacity="0.3"/>
<line x1="576" y1="492" x2="759" y2="492" stroke="#e8d0b8" stroke-width="1" opacity="0.3"/>
<line x1="576" y1="496" x2="759" y2="496" stroke="#e8d0b8" stroke-width="1" opacity="0.3"/>
<line x1="576" y1="500" x2="759" y2="500" stroke="#e8d0b8" stroke-width="1" opacity="0.3"/>
<line x1="576" y1="504" x2="759" y2="504" stroke="#e8d0b8" stroke-width="1" opacity="0.3"/>
<line x1="576" y1="508" x2="759" y2="508" stroke="#e8d0b8" stroke-width="1" opacity="0.3"/>
<line x1="576" y1="512" x2="759" y2="512" stroke="#e8d0b8" stroke-width="1" opacity="0.3"/>
<line x1="576" y1="516" x2="759" y2="516" stroke="#e8d0b8" stroke-width="1" opacity="0.3"/>
<line x1="576" y1="520" x2="759" y2="520" stroke="#e8d0b8" stroke-width="1" opacity="0.3"/>
<line x1="576" y1="524" x2="759" y2="524" stroke="#e8d0b8" stroke-width="1" opacity="0.3"/>
<line x1="576" y1="528" x2="759" y2="528" stroke="#e8d0b8" stroke-width="1" opacity="0.3"/>
<line x1="576" y1="532" x2="759" y2="532" stroke="#e8d0b8" stroke-width="1" opacity="0.3"/>
<line x1="576" y1="536" x2="759" y2="536" stroke="#e8d0b8" stroke-width="1" opacity="0.3"/>
<line x1="576" y1="540" x2="759" y2="540" stroke="#e8d0b8" stroke-width="1" opacity="0.3"/>
<line x1="576" y1="544" x2="759" y2="544" stroke="#e8d0b8" stroke-width="1" opacity="0.3"/>
<line x1="576" y1="548" x2="759" y2="548" stroke="#e8d0b8" stroke-width="1" opacity="0.3"/>
<line x1="576" y1="552" x2="759" y2="552" stroke="#e8d0b8" stroke-width="1" opacity="0.3"/>
<line x1="576" y1="556" x2="759" y2="556" stroke="#e8d0b8" stroke-width="1" opacity="0.3"/>
<line x1="576" y1="560" x2="759" y2="560" stroke="#e8d0b8" stroke-width="1" opacity="0.3"/>
<line x1="576" y1="564" x2="759" y2="564" stroke="#e8d0b8" stroke-width="1" opacity="0.3"/>
<line x1="576" y1="462" x2="621" y2="568" stroke="#4e3220" stroke-width="2.5" opacity="0.85"/>
<line x1="605" y1="462" x2="650" y2="568" stroke="#4e3220" stroke-width="2.5" opacity="0.85"/>
<line x1="635" y1="462" x2="680" y2="568" stroke="#4e3220" stroke-width="2.5" opacity="0.85"/>
<line x1="665" y1="462" x2="710" y2="568" stroke="#4e3220" stroke-width="2.5" opacity="0.85"/>
<line x1="695" y1="462" x2="740" y2="568" stroke="#4e3220" stroke-width="2.5" opacity="0.85"/>
<line x1="622" y1="478" x2="622" y2="568" stroke="#5e4030" stroke-width="2" opacity="0.7"/>
<line x1="662" y1="478" x2="662" y2="568" stroke="#5e4030" stroke-width="2" opacity="0.7"/>
<line x1="699" y1="478" x2="699" y2="568" stroke="#5e4030" stroke-width="2" opacity="0.7"/>
<line x1="732" y1="478" x2="732" y2="568" stroke="#5e4030" stroke-width="2" opacity="0.7"/>
<rect x="576" y="463" width="2" height="104" fill="#4e3220"/>
</g>
<polygon points="576.0,460.5 580.0,460.5 761.0,569.5 755.0,569.5" fill="#262838"/>
<rect x="950" y="0" width="1" height="552" fill="#a0a0a0"/>
<rect x="950" y="552" width="1" height="328" fill="#5e5c70"/>
</svg>
<div id="cm" class="a">
<div class="a" style="left:215px;top:0;width:1px;height:999px;background:#8a8a8a"></div>
<div class="a" style="left:216px;top:0;width:1px;height:999px;background:#f2f2f2"></div>
<div class="it" style="top:0px">Blending Options...</div>
<div class="it dis" style="top:24px">Edit Adjustment...</div>
<div class="sep" style="top:54px"></div>
<div class="it" style="top:60px">Copy CSS</div>
<div class="it" style="top:84px">Copy SVG</div>
<div class="it" style="top:108px">Duplicate Layer...</div>
<div class="it dis" style="top:132px">Delete Layer</div>
<div class="it" style="top:156px">Group from Layers...</div>
<div class="sep" style="top:186px"></div>
<div class="it" style="top:192px">Quick Export as PNG</div>
<div class="it" style="top:216px">Export As...</div>
<div class="sep" style="top:246px"></div>
<div class="it" style="top:252px">Artboard from Layers...</div>
<div class="sep" style="top:282px"></div>
<div class="a" style="left:2px;top:289px;width:212px;height:24px;background:#0a6dcb"></div>
<div class="it" style="top:288px;color:#fff">Convert to Smart Object</div>
<div class="sep" style="top:318px"></div>
<div class="it dis" style="top:324px">Rasterize Layer</div>
<div class="it dis" style="top:348px">Rasterize Layer Style</div>
<div class="sep" style="top:378px"></div>
<div class="it dis" style="top:384px">Disable Layer Mask</div>
<div class="it dis" style="top:408px">Enable Vector Mask</div>
<div class="it dis" style="top:432px">Create Clipping Mask</div>
<div class="sep" style="top:462px"></div>
<div class="it dis" style="top:468px">Link Layers</div>
<div class="it dis" style="top:492px">Select Linked Layers</div>
<div class="sep" style="top:522px"></div>
<div class="it dis" style="top:528px">Copy Layer Style</div>
<div class="it dis" style="top:552px">Paste Layer Style</div>
<div class="it dis" style="top:576px">Clear Layer Style</div>
<div class="sep" style="top:606px"></div>
<div class="it dis" style="top:612px">Copy Shape Attributes</div>
<div class="it dis" style="top:636px">Paste Shape Attributes</div>
<div class="sep" style="top:666px"></div>
<div class="it dis" style="top:672px">Release from Isolation</div>
<div class="sep" style="top:702px"></div>
<div class="it dis" style="top:708px">Merge Layers</div>
<div class="it dis" style="top:732px">Merge Visible</div>
<div class="it" style="top:756px">Flatten Image</div>
<div class="sep" style="top:786px"></div>
<div class="it" style="top:792px">No Color</div>
<div class="it" style="top:816px">Red</div>
<div class="it" style="top:840px">Orange</div>
<div class="it" style="top:864px">Yellow</div>
<div class="it" style="top:888px">Green</div>
<div class="it" style="top:912px">Blue</div>
<div class="it" style="top:936px">Violet</div>
<div class="it" style="top:960px">Gray</div>
<div class="sep" style="top:990px"></div>
<div class="it" style="left:241px;top:0px">Postcard</div>
<div class="it" style="left:241px;top:24px">New 3D Extrusion from Selected Layer</div>
<div class="it dis" style="left:241px;top:48px">New 3D Extrusion</div>
</div>

<div class="a" style="left:1789px;top:524px;width:1px;height:637px;background:#3a3a3a"></div>
<div class="a" style="left:1790px;top:524px;width:130px;height:637px;background:#4a4a4a;overflow:hidden">
<svg class="a" style="left:0;top:0" width="130" height="637" viewBox="1790 524 130 637">
<rect x="1790" y="524" width="130" height="16" fill="#404040"/>
<rect x="1790" y="524" width="30" height="16" fill="#474747"/>
<rect x="1820" y="524" width="1" height="16" fill="#3a3a3a"/>
<g fill="#c8c8c8"><rect x="1903" y="529" width="10" height="1"/><rect x="1903" y="531" width="10" height="1"/><rect x="1903" y="533" width="10" height="1"/><rect x="1903" y="535" width="10" height="1"/></g>
<rect x="1790" y="540" width="130" height="32" fill="#4d4d4d"/>
<rect x="1790" y="572" width="130" height="1.5" fill="#3c3c3c"/>
<rect x="1790" y="573.5" width="130" height="25" fill="#4c4c4c"/>
<rect x="1790" y="598.5" width="130" height="1.5" fill="#3f3f3f"/>
<rect x="1790" y="600" width="130" height="25" fill="#4b4b4b"/>
<rect x="1790" y="625" width="130" height="3" fill="#404040"/>
<rect x="1790" y="628" width="114" height="33" fill="#666666"/>
<rect x="1904" y="628" width="16" height="508" fill="#474747"/>

<!-- row1 icons -->
<rect x="1789" y="553.5" width="8" height="9" fill="none" stroke="#d0d0d0" stroke-width="1.2"/><polygon points="1790,561 1793,557 1796,561" fill="#d0d0d0"/>
<circle cx="1815.5" cy="558" r="5" fill="none" stroke="#d0d0d0" stroke-width="1.5"/><path d="M1812,561.5 L1819,554.5 A5,5 0 0,1 1812,561.5 Z" fill="#d0d0d0"/>
<path d="M1834.5,556 V552.5 H1845.5 V556 M1840,552.5 V563 M1837,563 H1843" fill="none" stroke="#d0d0d0" stroke-width="2"/>
<rect x="1859.5" y="553.5" width="9" height="9" fill="none" stroke="#d0d0d0" stroke-width="1.1"/><g fill="#4d4d4d" stroke="#d0d0d0" stroke-width="1"><rect x="1857.5" y="551.5" width="3" height="3"/><rect x="1867.5" y="551.5" width="3" height="3"/><rect x="1857.5" y="561.5" width="3" height="3"/><rect x="1867.5" y="561.5" width="3" height="3"/></g>
<path d="M1885.5,557 V552.5 H1890 L1892.5,555 V563.5 H1888" fill="none" stroke="#d0d0d0" stroke-width="1.1"/><rect x="1883" y="557.5" width="5.5" height="6" fill="#d0d0d0"/>
<rect x="1906" y="551" width="8" height="15" rx="4" fill="#3d3d3d"/><circle cx="1910.5" cy="554.5" r="3.8" fill="#cfcfcf"/>
<!-- row2 -->
<rect x="1788.5" y="576.5" width="27" height="18" fill="#454545" stroke="#555" stroke-width="1"/>
<polyline points="1805,583.5 1808,586.5 1811,583.5" fill="none" stroke="#c8c8c8" stroke-width="1"/>
<rect x="1864.5" y="577" width="50" height="17.5" fill="#3e3e3e" stroke="#575757" stroke-width="1"/>
<rect x="1899" y="577" width="1" height="17.5" fill="#555"/>
<polyline points="1904.5,583.5 1907.5,586.5 1910.5,583.5" fill="none" stroke="#c8c8c8" stroke-width="1"/>
<!-- row3 -->
<path d="M1790,605.5 H1795 L1798,608.5 V615" fill="none" stroke="#d0d0d0" stroke-width="1.2"/><path d="M1797,604 l1.5,-1.5 M1799,606 l2,0 M1797.5,617 v1.5" stroke="#d0d0d0" stroke-width="0.8"/>
<rect x="1809" y="611" width="10" height="7.5" fill="#d0d0d0"/><path d="M1811,611 v-2.5 a3,3 0 0,1 6,0 v2.5" fill="none" stroke="#d0d0d0" stroke-width="1.5"/><circle cx="1814" cy="614.5" r="0.9" fill="#4b4b4b"/>
<rect x="1864.5" y="604" width="50" height="17.5" fill="#3e3e3e" stroke="#575757" stroke-width="1"/>
<rect x="1899" y="604" width="1" height="17.5" fill="#555"/>
<polyline points="1904.5,610.5 1907.5,613.5 1910.5,610.5" fill="none" stroke="#c8c8c8" stroke-width="1"/>
<!-- bottom bar -->
<rect x="1790" y="1136" width="130" height="1" fill="#3a3a3a"/>
<rect x="1790" y="1137" width="130" height="24" fill="#4b4b4b"/>
<circle cx="1804.5" cy="1148" r="5.2" fill="#d0d0d0"/><path d="M1801,1151.5 L1808,1144.5 A5,5 0 0,0 1801,1151.5 Z" fill="#4b4b4b"/><path d="M1801.5,1150.5 L1807.5,1144.5" stroke="#444" stroke-width="1.5"/><polygon points="1812,1157 1814.5,1157 1813.25,1158.5" fill="#eee"/>
<rect x="1825" y="1144" width="12" height="9" fill="#d0d0d0"/><rect x="1825" y="1142.5" width="5" height="1" fill="#d0d0d0"/>
<rect x="1853" y="1144.5" width="9.5" height="9.5" fill="none" stroke="#d0d0d0" stroke-width="1.3"/><rect x="1856" y="1146" width="5" height="5" fill="#2a2a2a"/>
<path d="M1879.5,1145 h11 M1883,1145 v-1.5 h4 v1.5 M1880.5,1146 l1,8.5 h7 l1,-8.5 M1883.5,1147 v6 M1885,1147 v6 M1886.5,1147 v6" fill="none" stroke="#a8a8a8" stroke-width="1"/>
</svg>
<span class="ot" style="left:-2px;top:4px;font-size:10px;color:#b4b4b4">Paths</span>
<span class="ot" style="left:33px;top:54px;font-size:10px;color:#d8d8d8">Opacity:</span>
<span class="ot" style="left:78px;top:54px;font-size:10px;color:#e6e6e6">100%</span>
<span class="ot" style="left:55px;top:81px;font-size:10px;color:#d8d8d8">Fill:</span>
<span class="ot" style="left:78px;top:81px;font-size:10px;color:#e6e6e6">100%</span>
</div>
<div class="a" style="left:0;top:1102px;width:145px;height:28px;background:#000"></div>
<div class="a" style="left:0;top:1114px;width:160px;height:16px;background:#000"></div>
<div class="a" style="left:77px;top:1103px;font-weight:bold;font-size:11px;line-height:12px;color:#fff;letter-spacing:-0.55px;white-space:nowrap">VISUALIZING</div>
<div class="a" style="left:77px;top:1116px;font-weight:bold;font-size:11px;line-height:12px;color:#fff;letter-spacing:-0.65px;white-space:nowrap">ARCHITECTURE</div>
<div class="lab" style="left:792px;top:445px;width:422px;height:32px"></div>
<div class="lab" style="left:1577px;top:722px;width:294px;height:32px"></div>
<div class="a" style="left:812px;top:449px;font-size:22px;line-height:25px;color:#fff;white-space:nowrap;letter-spacing:0.85px;-webkit-text-stroke:0.7px #fff">2. Choose “Convert to Smart Object”</div>
<div class="a" style="left:1598px;top:726px;font-size:22px;line-height:25px;color:#fff;white-space:nowrap;letter-spacing:0.85px;-webkit-text-stroke:0.7px #fff">1. Right-Click on Layer</div>
<svg class="a" style="left:0;top:0" width="1920" height="1161">
<polyline points="1218,418 1263,463 1218,508" fill="none" stroke="#12d2b5" stroke-width="13" stroke-linejoin="miter"/>
<polyline points="1776,702 1821,657 1866,702" fill="none" stroke="#12d2b5" stroke-width="13" stroke-linejoin="miter"/>
</svg>
</body></html>
